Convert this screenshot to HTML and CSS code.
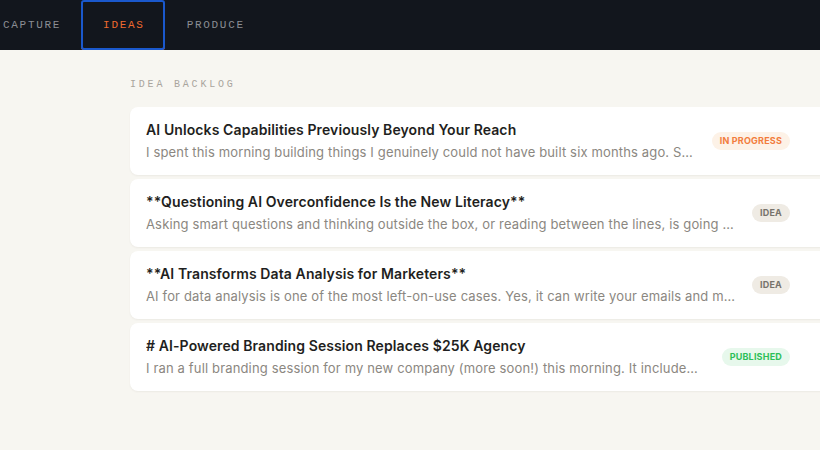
FILE: index.html
```html
<!DOCTYPE html>
<html lang="en">
<head>
<meta charset="utf-8">
<title>Ideas</title>
<link rel="stylesheet" href="styles.css">
</head>
<body>
  <header class="topbar">
    <nav class="tabs">
      <button class="tab">CAPTURE</button>
      <button class="tab tab-active">IDEAS</button>
      <button class="tab">PRODUCE</button>
    </nav>
  </header>

  <main class="content">
    <h2 class="section-label">IDEA BACKLOG</h2>
    <ul class="idea-list">
      <li class="idea-card">
        <div class="idea-text">
          <div class="idea-title">AI Unlocks Capabilities Previously Beyond Your Reach</div>
          <div class="idea-desc">I spent this morning building things I genuinely could not have built six months ago. So much of what used to take a team now takes an afternoon.</div>
        </div>
        <span class="badge badge-progress">IN PROGRESS</span>
      </li>
      <li class="idea-card">
        <div class="idea-text">
          <div class="idea-title">**Questioning AI Overconfidence Is the New Literacy**</div>
          <div class="idea-desc">Asking smart questions and thinking outside the box, or reading between the lines, is going to matter more than ever.</div>
        </div>
        <span class="badge badge-idea">IDEA</span>
      </li>
      <li class="idea-card">
        <div class="idea-text">
          <div class="idea-title">**AI Transforms Data Analysis for Marketers**</div>
          <div class="idea-desc">AI for data analysis is one of the most left-on-use cases. Yes, it can write your emails and make your slides, but the real value is elsewhere.</div>
        </div>
        <span class="badge badge-idea">IDEA</span>
      </li>
      <li class="idea-card">
        <div class="idea-text">
          <div class="idea-title"># AI-Powered Branding Session Replaces $25K Agency</div>
          <div class="idea-desc">I ran a full branding session for my new company (more soon!) this morning. It included all the strategy work an agency would charge for.</div>
        </div>
        <span class="badge badge-published">PUBLISHED</span>
      </li>
    </ul>
  </main>
</body>
</html>
```
FILE: styles.css
```css
* {
  box-sizing: border-box;
}

html,
body {
  margin: 0;
  padding: 0;
  overflow: hidden;
}

body {
  background: #f7f6f1;
  font-family: "Inter", "Noto Sans", sans-serif;
  color: #1d1d1f;
  width: 820px;
  height: 450px;
}

/* Top navigation bar */
.topbar {
  background: #12161d;
  height: 50px;
  display: flex;
  align-items: stretch;
}

.tabs {
  display: flex;
  align-items: stretch;
  margin-left: -19px;
}

.tab {
  background: transparent;
  border: none;
  border-bottom: 2px solid transparent;
  color: #8a8d93;
  font-family: "Liberation Mono", "DejaVu Sans Mono", monospace;
  font-size: 11px;
  letter-spacing: 1.7px;
  padding: 2px 20px 0 22px;
  height: 50px;
  cursor: pointer;
}

.tab-active {
  color: #ee6a2f;
  border-bottom-color: #ee6a2f;
  outline: 2px solid #1a58cc;
  outline-offset: -2px;
  border-radius: 3px;
}

/* Backlog list */
.content {
  margin-left: 130px;
  width: 720px;
  padding-top: 28px;
}

.section-label {
  margin: 0 0 15px;
  font-family: "Liberation Mono", "DejaVu Sans Mono", monospace;
  font-weight: 400;
  font-size: 10px;
  line-height: 14px;
  letter-spacing: 2.8px;
  color: #a9a59d;
}

.idea-list {
  list-style: none;
  margin: 0;
  padding: 0;
  display: flex;
  flex-direction: column;
  gap: 4px;
}

.idea-card {
  background: #ffffff;
  border-radius: 8px;
  box-shadow: 0 1px 2px rgba(60, 50, 30, 0.06);
  padding: 13px 60px 13px 16px;
  display: flex;
  align-items: center;
  gap: 16px;
}

.idea-text {
  flex: 1;
  min-width: 0;
  display: flex;
  flex-direction: column;
  gap: 2px;
}

.idea-title {
  font-size: 14px;
  font-weight: 600;
  line-height: 20px;
  letter-spacing: 0.1px;
  color: #1f1f21;
  white-space: nowrap;
  overflow: hidden;
  text-overflow: ellipsis;
}

.idea-desc {
  font-size: 13px;
  line-height: 20px;
  letter-spacing: 0.15px;
  color: #8b8781;
  white-space: nowrap;
  overflow: hidden;
  text-overflow: ellipsis;
}

.badge {
  flex: none;
  font-size: 9px;
  font-weight: 700;
  line-height: 18px;
  height: 18px;
  padding: 0 8px;
  border-radius: 9px;
  letter-spacing: 0.2px;
}

.badge-progress {
  background: #fdf2e7;
  color: #f27c3c;
}

.badge-idea {
  background: #efebe4;
  color: #77736c;
}

.badge-published {
  background: #e7f8ec;
  color: #2dbf58;
}
```
